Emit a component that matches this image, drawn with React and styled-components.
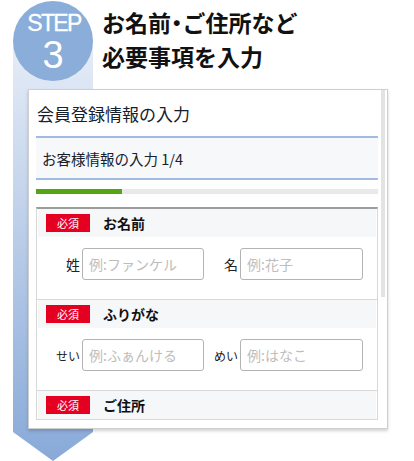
import React from "react";
import styled, { createGlobalStyle } from "styled-components";

const GlobalStyle = createGlobalStyle`
  html, body {
    margin: 0;
    padding: 0;
    background: #fff;
  }
  body {
    font-family: "Noto Sans CJK JP", "Noto Sans", sans-serif;
    color: #111;
  }
`;

const sections = [
  {
    title: "お名前",
    fields: [
      { label: "姓", size: 14, placeholder: "例:ファンケル" },
      { label: "名", size: 14, placeholder: "例:花子" },
    ],
  },
  {
    title: "ふりがな",
    fields: [
      { label: "せい", size: 12, placeholder: "例:ふぁんける" },
      { label: "めい", size: 12, placeholder: "例:はなこ" },
    ],
  },
  { title: "ご住所", fields: [] },
];

const App = () => {
  const step = 1;
  const total = 4;

  return (
    <Page>
      <GlobalStyle />
      {/* 左の STEP 帯 */}
      <StepColumn>
        <Circle>
          <StepLabel>STEP</StepLabel>
          <StepNumber>3</StepNumber>
        </Circle>
        <Shaft />
      </StepColumn>

      <Title>
        お名前<Dot>・</Dot>ご住所など
        <br />
        必要事項を入力
      </Title>

      <Card>
        <Content>
          <Heading>会員登録情報の入力</Heading>
          <SubHeading>
            お客様情報の入力 {step}/{total}
          </SubHeading>
          <Progress>
            <ProgressFill style={{ width: `${(step / total) * 100}%` }} />
          </Progress>

          <FormBox>
            {sections.map((section) => (
              <Section key={section.title}>
                <SectionHeader>
                  <Badge>必須</Badge>
                  <SectionTitle>{section.title}</SectionTitle>
                </SectionHeader>
                {section.fields.length > 0 && (
                  <FieldRow>
                    {section.fields.map((field) => (
                      <React.Fragment key={field.label}>
                        <FieldLabel $size={field.size}>{field.label}</FieldLabel>
                        <TextInput placeholder={field.placeholder} />
                      </React.Fragment>
                    ))}
                  </FieldRow>
                )}
              </Section>
            ))}
          </FormBox>
        </Content>
        <ScrollTrack>
          <ScrollThumb />
        </ScrollTrack>
      </Card>
    </Page>
  );
};

export default App;

const Page = styled.div`
  display: grid;
  grid-template-columns: 13px 15px 65px 295px;
  grid-template-rows: 89px 340px 32px;
  width: 414px;
  height: 461px;
  overflow: hidden;
`;

const StepColumn = styled.div`
  grid-column: 2 / 4;
  grid-row: 1 / 4;
  display: flex;
  flex-direction: column;
  align-items: center;
`;

const Circle = styled.div`
  position: relative;
  z-index: 1;
  width: 80px;
  height: 80px;
  margin-top: 1px;
  border-radius: 50%;
  background: #8badd9;
  color: #fff;
  display: flex;
  flex-direction: column;
  align-items: center;
  font-family: "Liberation Sans", Arial, sans-serif;
`;

const StepLabel = styled.div`
  font-size: 23px;
  line-height: 23px;
  letter-spacing: -1.6px;
  margin-top: 11px;
  margin-right: -2px;
  -webkit-text-stroke: 0.3px #fff;
`;

const StepNumber = styled.div`
  font-size: 38px;
  line-height: 38px;
  margin-top: 1px;
`;

const Shaft = styled.div`
  flex: 1;
  width: 80px;
  margin-top: -40px;
  background: linear-gradient(to bottom, #e6edf7 0%, #88a9d8 100%);
  clip-path: polygon(
    0 0,
    100% 0,
    100% calc(100% - 29px),
    50% 100%,
    0 calc(100% - 29px)
  );
`;

const Title = styled.h1`
  grid-column: 4;
  grid-row: 1;
  margin: 0;
  padding: 5px 0 0 9px;
  font-size: 23px;
  line-height: 34px;
  font-weight: 700;
  color: #111;
  white-space: nowrap;
`;

const Dot = styled.span`
  font-feature-settings: "palt";
`;

const Card = styled.div`
  grid-column: 3 / 5;
  grid-row: 2;
  z-index: 1;
  display: flex;
  background: #fff;
  border: 1px solid #cfcfcf;
  box-shadow: 0 2px 3px rgba(0, 0, 0, 0.18);
  overflow: hidden;
`;

const Content = styled.div`
  flex: 1;
  padding-left: 7px;
  min-width: 0;
`;

const ScrollTrack = styled.div`
  width: 9px;
  padding-left: 3px;
  padding-right: 2px;
  box-sizing: border-box;
`;

const ScrollThumb = styled.div`
  width: 4px;
  height: 207px;
  background: #e3e3e3;
`;

const Heading = styled.h2`
  margin: 0;
  height: 46px;
  display: flex;
  align-items: center;
  padding-left: 1px;
  font-size: 17px;
  font-weight: 400;
  color: #16202b;
  border-bottom: 2px solid #a2bbe2;
`;

const SubHeading = styled.div`
  height: 40px;
  display: flex;
  align-items: center;
  padding-left: 6px;
  font-size: 14.5px;
  color: #16202b;
  background: #f6f8fa;
  border-bottom: 2px solid #a2bbe2;
`;

const Progress = styled.div`
  margin-top: 9px;
  height: 5px;
  background: #e9e9e9;
`;

const ProgressFill = styled.div`
  height: 100%;
  background: #55a413;
`;

const FormBox = styled.div`
  margin-top: 13px;
  border-top: 2px solid #9c9c9c;
  border-left: 1px solid #d8d8d8;
  border-right: 1px solid #d8d8d8;
`;

const Section = styled.div`
  border-bottom: 1px solid #d8d8d8;
`;

const SectionHeader = styled.div`
  height: 28px;
  display: flex;
  align-items: center;
  margin: 0 1px;
  background: #f6f7f9;
`;

const Badge = styled.span`
  width: 44px;
  height: 18px;
  margin-left: 8px;
  display: flex;
  align-items: center;
  justify-content: center;
  background: #e50021;
  color: #fff;
  font-size: 11px;
`;

const SectionTitle = styled.span`
  margin-left: 13px;
  font-size: 14px;
  font-weight: 700;
  color: #111;
`;

const FieldRow = styled.div`
  display: grid;
  grid-template-columns: 45px 122px 36px 123px;
  align-items: center;
  padding: 11px 0 19px;
`;

const FieldLabel = styled.label`
  text-align: right;
  padding-right: 2px;
  font-size: ${(p) => p.$size}px;
  color: #222;
`;

const TextInput = styled.input`
  box-sizing: border-box;
  width: 100%;
  height: 32px;
  margin: 0;
  padding: 0 6px;
  border: 1px solid #b3b3b3;
  border-radius: 3px;
  background: #fff;
  font-family: "Noto Sans CJK JP", "Noto Sans", sans-serif;
  font-size: 14px;
  color: #222;
  outline: none;

  &::placeholder {
    color: #bdbdbd;
  }
`;
